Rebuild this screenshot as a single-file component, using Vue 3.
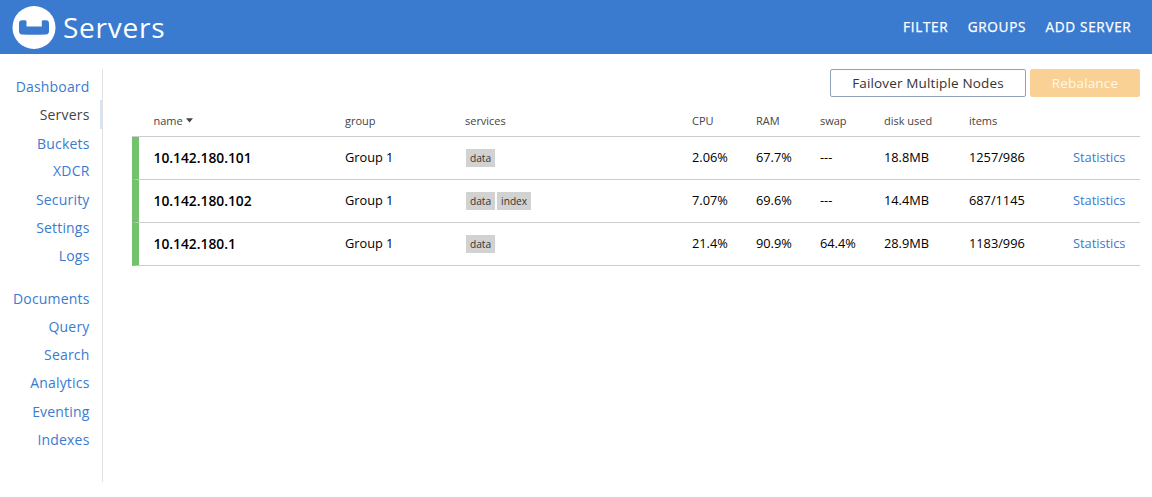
<script setup>
const primary = ['Dashboard', 'Servers', 'Buckets', 'XDCR', 'Security', 'Settings', 'Logs']
const secondary = ['Documents', 'Query', 'Search', 'Analytics', 'Eventing', 'Indexes']
const servers = [
  { name: '10.142.180.101', services: ['data'], cpu: '2.06%', ram: '67.7%', swap: '---', disk: '18.8MB', items: '1257/986' },
  { name: '10.142.180.102', services: ['data', 'index'], cpu: '7.07%', ram: '69.6%', swap: '---', disk: '14.4MB', items: '687/1145' },
  { name: '10.142.180.1', services: ['data'], cpu: '21.4%', ram: '90.9%', swap: '64.4%', disk: '28.9MB', items: '1183/996' },
]
</script>

<template>
  <div class="page">
    <header class="topbar">
      <svg class="logo" width="44" height="44" viewBox="0 0 44 44">
        <circle cx="22" cy="21.5" r="21.5" fill="#fff" />
        <path d="M10 14.3Q7 14.4 7 17.4V25.2Q7 28.1 10 28.4Q22 29.3 34 28.4Q37 28.1 37 25.2V17.4Q37 14.4 34 14.3Q29.8 14 29.8 14.8V20.6H14.5V14.8Q14.5 14 10 14.3Z" fill="#3a7bd0" />
      </svg>
      <h1>Servers</h1>
      <nav class="actions"><a>FILTER</a><a>GROUPS</a><a>ADD SERVER</a></nav>
    </header>
    <div class="body">
      <nav class="sidebar">
        <a v-for="p in primary" :key="p" :class="{ current: p === 'Servers', lowered: p === 'Buckets' }"><span>{{ p }}</span></a>
        <div class="gap"></div>
        <a v-for="p in secondary" :key="p" :class="{ lowered: p === 'Eventing' }"><span>{{ p }}</span></a>
      </nav>
      <main>
        <div class="buttons">
          <button class="outline">Failover Multiple Nodes</button>
          <button class="rebalance">Rebalance</button>
        </div>
        <div class="row head">
          <span class="sort">name<svg width="7" height="5" viewBox="0 0 7 5"><path d="M0 .2H7L3.5 4.6Z" fill="#444" /></svg></span>
          <span>group</span><span>services</span><span>CPU</span><span>RAM</span><span>swap</span><span>disk used</span><span>items</span>
        </div>
        <div v-for="s in servers" :key="s.name" class="row server">
          <span class="name">{{ s.name }}</span>
          <span>Group 1</span>
          <span class="tags"><i v-for="t in s.services" :key="t">{{ t }}</i></span>
          <span>{{ s.cpu }}</span><span>{{ s.ram }}</span><span>{{ s.swap }}</span><span>{{ s.disk }}</span><span>{{ s.items }}</span>
          <a class="stats">Statistics</a>
        </div>
      </main>
    </div>
  </div>
</template>

<style>
body { background: #fff; }
</style>
<style scoped>
.page { height: 497px; font-family: "Open Sans", sans-serif; color: #000; overflow: hidden; }
.topbar { height: 54px; box-sizing: border-box; background: #3a7bd0; display: flex; align-items: center; padding: 0 20px 0 12px; color: #fff; }
.logo { flex: none; margin-top: 2px; }
h1 { margin: 0 0 1px 7px; font-size: 28px; font-weight: 400; letter-spacing: 0.75px; line-height: 38px; }
.actions { margin: 0 0.6px 2px auto; display: flex; gap: 19.5px; font-size: 13.6px; -webkit-text-stroke: 0.25px #fff; letter-spacing: 0.65px; }
.body { display: flex; }
.sidebar { width: 103px; height: 413px; box-sizing: border-box; border-right: 1px solid #e2e2e2; margin-top: 15px; padding-top: 3.2px; flex: none; }
.sidebar a { display: flex; align-items: center; justify-content: flex-end; box-sizing: border-box; height: 28.2px; padding-right: 12.5px; font-size: 14px; letter-spacing: 0.18px; color: #3a7bd0; }
.sidebar .current { color: #444; border-right: 2px solid #d6e2f5; padding-right: 10.5px; }
.sidebar .lowered { padding-top: 1.6px; }
.gap { height: 14.5px; }
main { flex: 1; padding: 15px 12px 0 29px; }
.buttons { display: flex; justify-content: flex-end; gap: 4px; }
button { height: 28px; box-sizing: border-box; border-radius: 2px; border: 1px solid #8fa2b6; padding: 0 0 1px; font: 13.5px "Open Sans", sans-serif; letter-spacing: 0.15px; }
.outline { width: 196px; background: #fff; color: #333; }
.rebalance { width: 110px; background: #f9d194; border-color: #f9d194; color: #fff7e9; }
.row { display: grid; grid-template-columns: 191px 120px 227px 64px 64px 64px 85px 104px 1fr; box-sizing: border-box; padding-left: 22px; border-bottom: 1px solid #ccc; align-items: center; font-size: 12.8px; letter-spacing: -0.02px; }
.head { height: 40px; padding-top: 8px; font-size: 11px; color: #444; }
.server { height: 43px; padding-left: 15px; padding-bottom: 2px; border-left: 7px solid #75c26e; }
.sort svg { margin-left: 3px; vertical-align: 2px; }
.head .sort { margin-left: -0.5px; }
.name { margin-left: -0.5px; font-size: 13.8px; font-weight: 600; letter-spacing: 0; }
.tags { display: flex; gap: 2px; padding-left: 1px; padding-top: 2px; }
.tags i { background: #d2d2d2; height: 18px; line-height: 18px; padding: 0 4px; font-size: 10.2px; font-style: normal; color: #333; }
.stats { color: #3a7bd0; }
</style>
